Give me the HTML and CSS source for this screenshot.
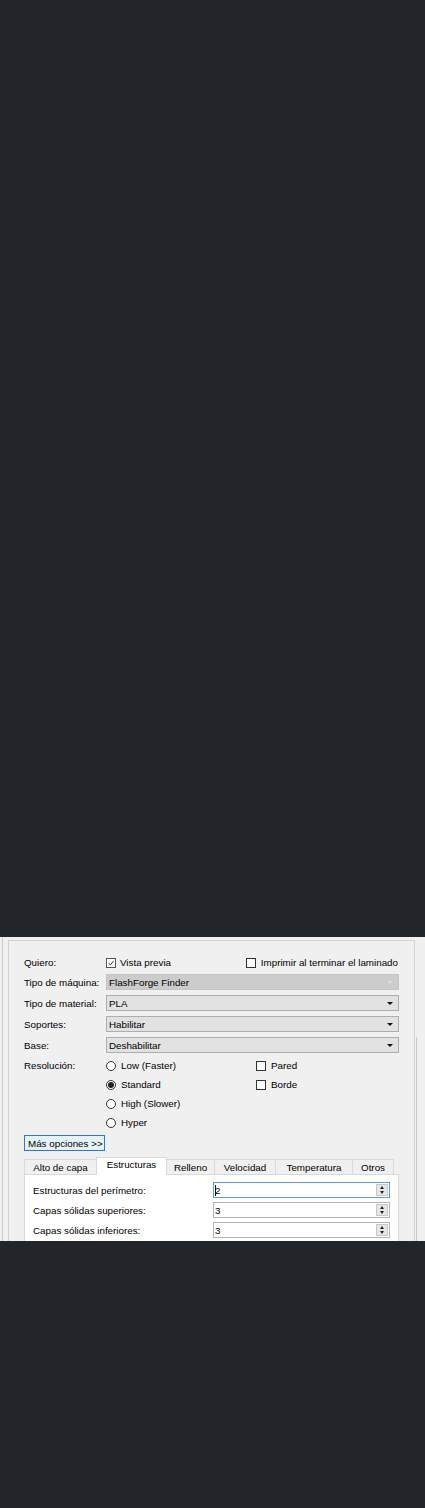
FILE: index.html
```html
<!DOCTYPE html>
<html lang="es">
<head>
<meta charset="utf-8">
<title>Opciones de laminado</title>
<link rel="stylesheet" href="styles.css">
</head>
<body>
<div class="top-space"></div>
<div class="window">
  <div class="edge"></div>
  <div class="group">
    <div class="row row-first">
      <span class="label">Quiero:</span>
      <span class="check"><span class="box checked"><svg viewBox="0 0 10 10" width="10" height="10"><path d="M2 5.2 L4.2 7.4 L8.2 2.6" fill="none" stroke="#222" stroke-width="1.1"/></svg></span>Vista previa</span>
      <span class="check push"><span class="box"></span>Imprimir al terminar el laminado</span>
    </div>
    <div class="row combo-row">
      <span class="label">Tipo de máquina:</span>
      <span class="combo disabled"><span class="combo-text">FlashForge Finder</span><span class="arrow"></span></span>
    </div>
    <div class="row combo-row">
      <span class="label">Tipo de material:</span>
      <span class="combo"><span class="combo-text">PLA</span><span class="arrow"></span></span>
    </div>
    <div class="row combo-row">
      <span class="label">Soportes:</span>
      <span class="combo"><span class="combo-text">Habilitar</span><span class="arrow"></span></span>
    </div>
    <div class="row combo-row">
      <span class="label">Base:</span>
      <span class="combo"><span class="combo-text">Deshabilitar</span><span class="arrow"></span></span>
    </div>
    <div class="res">
      <span class="label res-label">Resolución:</span>
      <div class="radios">
        <span class="radio"><span class="dot"></span>Low (Faster)</span>
        <span class="radio"><span class="dot on"></span>Standard</span>
        <span class="radio"><span class="dot"></span>High (Slower)</span>
        <span class="radio"><span class="dot"></span>Hyper</span>
      </div>
      <div class="extras">
        <span class="check extra"><span class="box"></span>Pared</span>
        <span class="check extra"><span class="box"></span>Borde</span>
      </div>
    </div>
    <div class="btn-row"><span class="button">Más opciones &gt;&gt;</span></div>
    <div class="tabs">
      <span class="tab">Alto de capa</span>
      <span class="tab selected">Estructuras</span>
      <span class="tab">Relleno</span>
      <span class="tab">Velocidad</span>
      <span class="tab">Temperatura</span>
      <span class="tab">Otros</span>
    </div>
    <div class="pane">
      <div class="prow">
        <span class="plabel">Estructuras del perímetro:</span>
        <span class="spin focus"><span class="spin-text"><span class="caret"></span>2</span><span class="spin-btn"><span class="up"></span><span class="down"></span></span></span>
      </div>
      <div class="prow">
        <span class="plabel">Capas sólidas superiores:</span>
        <span class="spin"><span class="spin-text">3</span><span class="spin-btn"><span class="up"></span><span class="down"></span></span></span>
      </div>
      <div class="prow">
        <span class="plabel">Capas sólidas inferiores:</span>
        <span class="spin"><span class="spin-text">3</span><span class="spin-btn"><span class="up"></span><span class="down"></span></span></span>
      </div>
    </div>
  </div>
  <div class="rightline"></div>
</div>
<div class="bottom-space"></div>
</body>
</html>
```
FILE: styles.css
```css
* { box-sizing: border-box; }
html, body {
  margin: 0;
  padding: 0;
  background: #222529;
}
body {
  width: 425px;
  height: 1508px;
  font-family: "Liberation Sans", Arial, sans-serif;
  font-size: 9.8px;
  color: #000;
  overflow: hidden;
}
.top-space { height: 937px; }
.bottom-space { height: 267px; }

.window {
  height: 304px;
  background: #f0f0f0;
  display: flex;
  overflow: hidden;
}
.edge {
  width: 1px;
  margin-left: 2px;
  background: #c9c9c9;
}
.group {
  margin: 3px 0 0 5px;
  width: 407px;
  border: 1px solid #d2d2d2;
  border-bottom: none;
  padding: 14px 15px 0 15px;
  flex: none;
}
.rightline {
  width: 1px;
  margin-left: 1px;
  margin-top: 100px;
  background: #c9c9c9;
}

.row {
  display: flex;
  align-items: center;
}
.label {
  width: 82px;
  flex: none;
  white-space: nowrap;
}
.row-first { height: 15px; }

.check {
  display: inline-flex;
  align-items: center;
  white-space: nowrap;
}
.check.push {
  margin-left: auto;
  margin-right: 1px;
}
.box {
  width: 10px;
  height: 10px;
  border: 1px solid #333;
  background: #fff;
  margin-right: 5px;
  display: inline-flex;
  align-items: center;
  justify-content: center;
  flex: none;
}
.box svg { display: block; }
.box.checked {
  border-color: #555;
  margin-right: 4px;
}

.combo-row {
  height: 16px;
  margin-top: 5px;
}
.row-first + .combo-row { margin-top: 4px; }
.combo {
  width: 295px;
  height: 16px;
  border: 1px solid #adadad;
  background: #e2e2e2;
  display: flex;
  align-items: center;
  justify-content: space-between;
  padding: 0 5px 0 2px;
}
.combo.disabled {
  background: #cccccc;
  border-color: #c4c4c4;
}
.combo-text { white-space: nowrap; }
.arrow {
  width: 0;
  height: 0;
  border-left: 3px solid transparent;
  border-right: 3px solid transparent;
  border-top: 3px solid #111;
}
.combo.disabled .arrow { border-top-color: #dedede; }

.res {
  display: flex;
  margin-top: 3px;
}
.res-label {
  height: 19px;
  line-height: 19px;
}
.radios {
  width: 150px;
  display: flex;
  flex-direction: column;
  flex: none;
}
.radio {
  height: 19px;
  display: flex;
  align-items: center;
  white-space: nowrap;
}
.dot {
  width: 10px;
  height: 10px;
  border-radius: 50%;
  border: 1px solid #333;
  background: #fff;
  margin-right: 5px;
  display: inline-flex;
  align-items: center;
  justify-content: center;
}
.dot.on::after {
  content: "";
  width: 6px;
  height: 6px;
  border-radius: 50%;
  background: #222;
}
.extras {
  display: flex;
  flex-direction: column;
}
.extra { height: 19px; }

.btn-row {
  margin-top: 3px;
  display: flex;
}
.button {
  height: 16px;
  width: 81px;
  border: 1px solid #2c7ac6;
  background: #e5f1fb;
  display: flex;
  align-items: center;
  padding-left: 3px;
  white-space: nowrap;
}

.tabs {
  margin-top: 6px;
  height: 17px;
  display: flex;
  align-items: flex-end;
}
.tab {
  height: 15px;
  padding: 0 9px;
  display: flex;
  align-items: center;
  justify-content: center;
  border: 1px solid #d9d9d9;
  border-bottom: none;
  border-left: none;
  background: #f0f0f0;
  white-space: nowrap;
}
.tab:first-child { border-left: 1px solid #d9d9d9; width: 73px; }
.tab.selected {
  background: #fff;
  border-left: 1px solid #d9d9d9;
  margin-left: -1px;
  width: 71px;
  align-items: flex-start;
  padding-top: 1px;
  position: relative;
  z-index: 1;
  margin-bottom: -1px;
  height: 18px;
}
.tab:nth-child(3) { width: 48px; }
.tab:nth-child(4) { width: 61px; }
.tab:nth-child(5) { width: 77px; }
.tab:nth-child(6) { width: 41px; }

.pane {
  width: 375px;
  height: 80px;
  background: #fff;
  border: 1px solid #d9d9d9;
  padding: 7px 8px 0 8px;
}
.prow {
  height: 16px;
  display: flex;
  align-items: center;
  margin-bottom: 4px;
}
.plabel {
  width: 180px;
  flex: none;
  white-space: nowrap;
}
.spin {
  width: 177px;
  height: 16px;
  border: 1px solid #b4b4b4;
  background: #fff;
  display: flex;
  align-items: stretch;
  justify-content: space-between;
}
.spin.focus { border-color: #5a9fdc; }
.spin-text {
  display: flex;
  align-items: center;
  padding-left: 1px;
}
.caret {
  width: 1px;
  height: 11px;
  background: #111;
  margin-right: -1px;
}
.spin-btn {
  width: 12px;
  margin: 1px 1px 1px 0;
  background: #e6e6e6;
  border: 1px solid #c8c8c8;
  display: flex;
  flex-direction: column;
  align-items: center;
  justify-content: center;
  gap: 2px;
}
.up {
  width: 0; height: 0;
  border-left: 2.5px solid transparent;
  border-right: 2.5px solid transparent;
  border-bottom: 3px solid #222;
}
.down {
  width: 0; height: 0;
  border-left: 2.5px solid transparent;
  border-right: 2.5px solid transparent;
  border-top: 3px solid #222;
}
```
